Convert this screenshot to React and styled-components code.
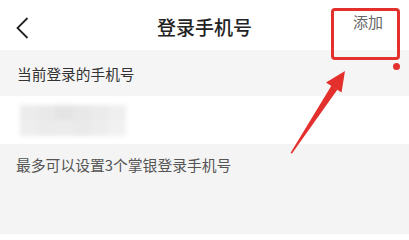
import React from 'react'
import styled, { createGlobalStyle } from 'styled-components'

const GlobalStyle = createGlobalStyle`
  html, body {
    margin: 0;
    padding: 0;
    background: #fff;
  }
  body {
    font-family: "Noto Sans CJK SC", "Noto Sans", sans-serif;
    color: #333;
  }
`

const Screen = styled.div`
  position: relative;
  width: 409px;
  height: 234px;
  overflow: hidden;
  display: flex;
  flex-direction: column;
  background: #f5f5f5;
`

const Header = styled.header`
  height: 50px;
  display: flex;
  align-items: center;
  justify-content: center;
  position: relative;
  background: #fff;
`

const BackButton = styled.button`
  position: absolute;
  left: 14px;
  top: 16px;
  padding: 0;
  border: 0;
  background: none;
  display: flex;
`

const Title = styled.h1`
  margin: 3px 0 0;
  font-size: 19px;
  font-weight: 500;
  color: #222;
`

const AddLink = styled.span`
  position: absolute;
  right: 26px;
  top: 11px;
  font-size: 15px;
  color: #666;
`

const SectionLabel = styled.div`
  height: 46px;
  display: flex;
  align-items: center;
  padding-left: 17px;
  font-size: 14.7px;
  color: #333;
  background: #f5f5f5;
`

const PhoneRow = styled.div`
  height: 48px;
  display: flex;
  align-items: center;
  padding-left: 20px;
  background: #fff;
`

const Blurred = styled.div`
  width: 106px;
  height: 31px;
  display: grid;
  grid-template-columns: repeat(6, 1fr);
  grid-template-rows: repeat(2, 1fr);
  filter: blur(2px);
`

const Tile = styled.span`
  background: ${(p) => p.$tone};
`

const Footer = styled.div`
  flex: 1;
  padding: 10px 0 0 16px;
  font-size: 14.8px;
  color: #555;
  background: #f4f4f4;
`

const Overlay = styled.svg`
  position: absolute;
  left: 0;
  top: 0;
  pointer-events: none;
`

const Highlight = styled.div`
  position: absolute;
  left: 331px;
  top: 8px;
  width: 63px;
  height: 46px;
  border: 3px solid #e3302d;
  border-radius: 4px;
`

const Dot = styled.div`
  position: absolute;
  left: 393px;
  top: 63px;
  width: 7px;
  height: 7px;
  border-radius: 50%;
  background: #e3302d;
`

const tones = [
  '#ececec', '#e9e9e9', '#e4e4e4', '#e8e8e8', '#ebebeb', '#efefef',
  '#eeeeee', '#ebebeb', '#ececec', '#eaeaea', '#ededed', '#f1f1f1',
]

export default function App() {
  return (
    <>
      <GlobalStyle />
      <Screen>
        <Header>
          <BackButton type="button">
            <svg width="16" height="24" viewBox="0 0 16 24">
              <path d="M13.5 2 L3.5 12 L13.5 22" fill="none" stroke="#222" strokeWidth="1.8" />
            </svg>
          </BackButton>
          <Title>登录手机号</Title>
          <AddLink>添加</AddLink>
        </Header>
        <SectionLabel>当前登录的手机号</SectionLabel>
        <PhoneRow>
          <Blurred>
            {tones.map((t, i) => (
              <Tile key={i} $tone={t} />
            ))}
          </Blurred>
        </PhoneRow>
        <Footer>最多可以设置3个掌银登录手机号</Footer>

        <Highlight />
        <Dot />
        <Overlay width="409" height="234" viewBox="0 0 409 234">
          <polygon points="290.5,153 292,153.5 337.5,89.5 331.5,85.5" fill="#e3302d" />
          <polygon points="345,71 326,82.5 341.5,92.5" fill="#e3302d" />
        </Overlay>
      </Screen>
    </>
  )
}
